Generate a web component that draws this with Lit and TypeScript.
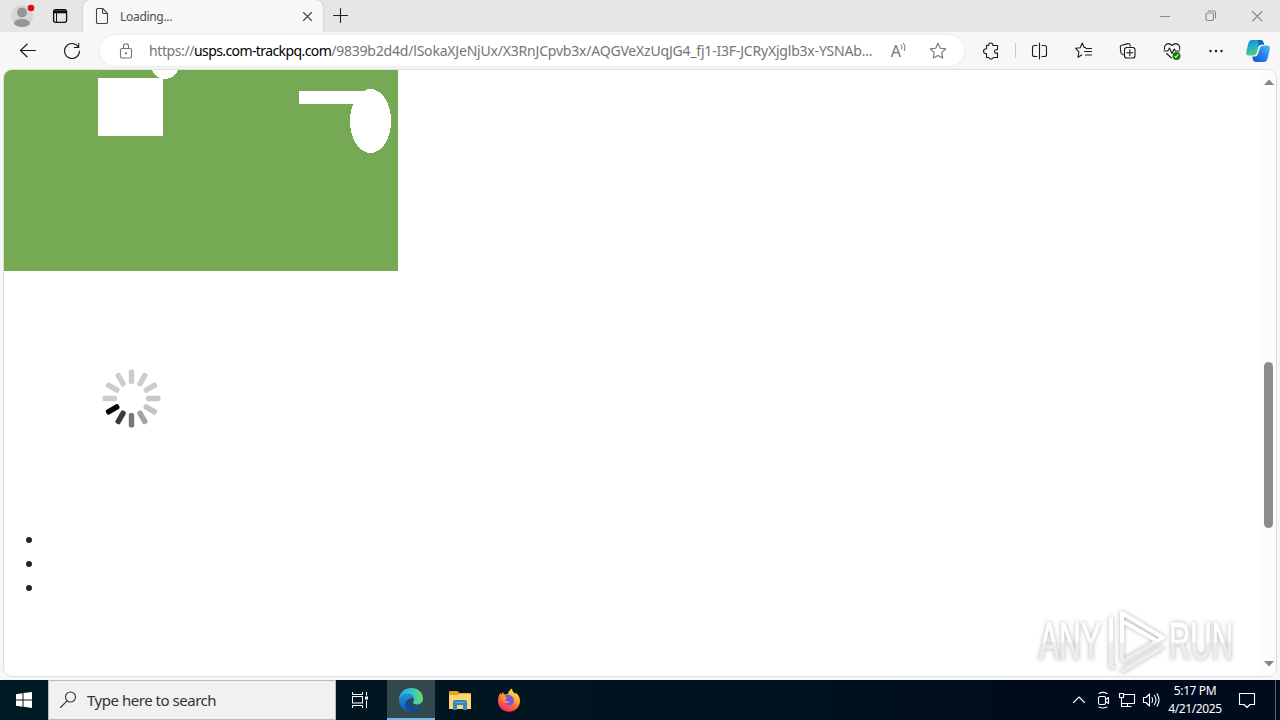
import { LitElement, html, css, svg } from 'lit';
import { customElement } from 'lit/decorators.js';

const stroke = (body: unknown, size = 24) => html`
  <svg class="icon" width=${size} height=${size} viewBox="0 0 24 24" fill="none"
    stroke="currentColor" stroke-width="1.1" stroke-linejoin="round" stroke-linecap="round">${body}</svg>
`;

const icons = {
  page: stroke(svg`<path d="M7.5 4.5h5.2l4.8 4.8v8.9q0 1.3-1.3 1.3H7.8q-1.3 0-1.3-1.3V5.8q0-1.3 1-1.3ZM12.5 4.8v3.4q0 1.3 1.3 1.3h3.4"/>`),
  close: stroke(svg`<path d="m8.5 8.5 8 8m0-8-8 8"/>`),
  plus: stroke(svg`<path d="M5.5 11.5h14m-7-7v14"/>`),
  minimize: stroke(svg`<path d="M7.5 12.5h9"/>`),
  restore: stroke(svg`<rect x="7" y="9" width="7.5" height="7.5" rx="1.5"/><path d="M9.2 7h5.3q2 0 2 2v5"/>`),
  closeWindow: stroke(svg`<path d="m7.5 7.5 9.5 9.5m0-9.5-9.5 9.5"/>`),
  back: stroke(svg`<path d="M19.5 11.5h-15M11.2 5l-6.7 6.5 6.7 6.5"/>`),
  reload: stroke(svg`<path d="M18 7.5A7.5 7.5 0 1 0 19.5 12M18.7 4.3v4.2h-4.4"/>`),
  lock: stroke(svg`<rect x="6.5" y="9.5" width="11" height="9.5" rx="1.5"/><path d="M9.5 9.5V7.3a2.5 2.5 0 0 1 5 0v2.2"/><circle cx="12" cy="14.3" r=".6" fill="currentColor"/>`),
  readAloud: html`
    <svg class="icon" width="24" height="24" viewBox="0 0 24 24">
      <text class="letter" x="4.7" y="17.5">A</text>
      <path d="M15 5.5q1.8 2.2.5 5M17.3 4q3 3.500 1 8" fill="none" stroke="currentColor"/>
    </svg>
  `,
  star: stroke(svg`<path d="m12 4.2 2.3 5 5.4.7-4 3.8 1 5.4-4.7-2.7-4.8 2.7 1-5.4-4-3.8 5.5-.7Z"/>`),
  puzzle: stroke(svg`<path d="M7.5 6.5h2.2q-.2-2.500 2.1-2.500t2.1 2.500h4.600v4.200h-1.200q-1.800 0-1.800 1.700t1.800 1.700h1.200v4.400h-4.300q-.2 1.600-2.100 1.600T10 18.500H7.500v-3.700q-3-.1-3-2.500t3-2.500Z"/>`),
  split: stroke(svg`<path d="M11.500 4v16M9 6.500H6.500q-2 0-2 2v7q0 2 2 2H9M14 6.500h2.500q2 0 2 2v7q0 2-2 2H14"/>`),
  favorites: stroke(svg`<path d="M13.500 8.500h-1.300l-2-4.500-2 4.700-4.500.6 3.200 3.500-1 5.500 3.800-2.200M14 9.500h5.500m-7 3h7m-6 3.500h6"/>`),
  collections: stroke(svg`<path d="M7.3 15.800 6 15q-1-.5-1.200-1.500L4.300 8.200q-.2-1.700 1.500-2L12 4.600q1.600-.3 2 1.200l.3 1.300"/><rect x="8.500" y="8.500" width="10.500" height="10.500" rx="2.300"/><path d="M13.800 10.800v6m-3-3h6"/>`),
  more: html`
    <svg class="icon" width="24" height="24" viewBox="0 0 24 24" fill="currentColor">
      <circle cx="6.500" cy="12" r="1.200"/><circle cx="12" cy="12" r="1.200"/><circle cx="17.500" cy="12" r="1.200"/>
    </svg>
  `,
  health: html`
    <svg class="icon" width="24" height="24" viewBox="0 0 24 24" fill="none" stroke="currentColor" stroke-width="1.1" stroke-linejoin="round" stroke-linecap="round">
      <path d="M4.500 10.500q-.5-2.500.7-4.200 3-3.500 6.800.2 4-3.700 7-.2 1.300 1.700.6 4.200M4 12h3.800l1.700-3 2.500 5.500 2.200-4.500 1.200 2h4M6.500 14.500l5 4.500"/>
      <circle cx="16.500" cy="17" r="4" fill="#107c10" stroke="none"/>
      <path d="m14.800 17.400 1 1 2.300-2.800" stroke="#d8f0d8"/>
    </svg>
  `,
  copilot: html`
    <svg class="icon" width="28" height="28" viewBox="0 0 28 28">
      <defs>
        <linearGradient id="cl" x1="0" y1="0" x2="0.4" y2="1"><stop offset="0" stop-color="#1676d8"/><stop offset=".4" stop-color="#1eabd2"/><stop offset="1" stop-color="#4fcf79"/></linearGradient>
        <linearGradient id="cr" x1="1" y1="0" x2="0" y2="1"><stop offset="0" stop-color="#45c3f5"/><stop offset=".5" stop-color="#257ff1"/><stop offset="1" stop-color="#1557cf"/></linearGradient>
      </defs>
      <path fill="url(#cl)" d="M8 3h8.500q2 0 2.800 2l.8 2.500h-2.500q-2.400 0-3.200 2.500l-2 6.500q-.7 2-3 2H5q-3.500 0-2.700-3.800l2-8.200Q5.200 3 8 3Z"/>
      <path fill="#1463c9" d="M14 3h2.500q2 0 2.800 2l.8 2.500h-2.500q-2 0-3 1.800Z"/>
      <path fill="url(#cr)" d="M20.500 8.500H23q3.500 0 2.800 3.800l-2 8.200q-.9 4.500-4 4.500H12q-2.300 0-3-2l-.8-3.500h2.500q2.400 0 3.200-2.500l2-6q.8-2.500 4.600-2.500Z"/>
    </svg>
  `,
  workspaces: html`
    <svg class="icon" width="24" height="24" viewBox="0 0 24 24" fill="none" stroke="#111" stroke-width="1.3">
      <rect x="5.600" y="5.700" width="13" height="12.600" rx="2"/><path d="M6 7.800h12.500" stroke-width="3"/><path d="M8.500 8v10" stroke-width="1"/>
    </svg>
  `,
  search: stroke(svg`<circle cx="14.500" cy="9" r="5"/><path d="M11 12.800 4.500 19.500"/>`),
  taskView: html`
    <svg class="icon" width="24" height="24" viewBox="0 0 24 24" fill="none" stroke="currentColor">
      <path d="M4.500 4v2.500h10V4M4.500 20v-2.500h10V20M18.500 4v3.500m0 5V20"/><rect x="4.500" y="8.500" width="10" height="6.500"/><path d="M17 10h3" stroke-width="3"/>
    </svg>
  `,
  chevron: stroke(svg`<path d="m6.500 14.500 5.500-5.500 5.500 5.500"/>`),
  meet: stroke(svg`<rect x="7.500" y="8.500" width="7" height="8" rx="1.500"/><path d="m14.500 11.500 3-2v6l-3-2M8 5.500q4-2.200 8 0M8 19q4 2 8 0"/>`),
  network: stroke(svg`<path d="M8.500 6.500h11v9h-13v-5M12.500 15.500v3m-3.500 0h7M4.500 5.500h4v4h-4zM6.500 9.500v9H9"/>`),
  volume: stroke(svg`<path d="M4.500 9.500H7L10.500 6v12L7 14.500H4.500zM13 9.500q1.500 2.500 0 5M15.500 7.500q3 4.500 0 9M18 5.800q4 6.200 0 12.400"/>`),
  notify: stroke(svg`<path d="M4.500 5.500h15v11H15L12 19.500l-3-3H4.500z"/>`),
};

@customElement('browser-tabs')
export class BrowserTabs extends LitElement {
  static styles = css`
    :host {
      display: flex;
      height: 32px;
      background: #e6e6e6;
      color: #222;
    }

    .icon {
      display: block;
      flex: none;
    }

    .start {
      display: flex;
      align-items: center;
      width: 83px;
      padding-left: 9px;
      box-sizing: border-box;
      gap: 12px;
    }

    .tab {
      display: flex;
      align-items: center;
      width: 240px;
      padding: 0 4px 0 7px;
      box-sizing: border-box;
      background: #f7f7f7;
      border-radius: 7px 7px 0 0;
      box-shadow: 0 0 2px #aaa;
      clip-path: inset(0 -3px);
      color: #444;
    }

    .title {
      flex: 1;
      padding-left: 6px;
      font-size: 12px;
      letter-spacing: -0.3px;
      color: #4d4d4d;
    }

    .new {
      display: flex;
      align-items: center;
      padding-left: 5px;
    }

    .controls {
      display: flex;
      align-items: center;
      gap: 22px;
      margin-left: auto;
      padding-right: 11px;
      color: #8a8a8a;
    }
  `;

  render() {
    return html`
      <div class="start">
        <svg class="icon" width="27" height="26" viewBox="0 0 27 26">
          <circle cx="13" cy="13" r="11" fill="#d9d7d5"/>
          <circle cx="13" cy="9.500" r="5" fill="#989694"/>
          <ellipse cx="13" cy="20" rx="8" ry="4" fill="#989694"/>
          <circle cx="22" cy="5" r="3.300" fill="#e20b14"/>
        </svg>
        ${icons.workspaces}
      </div>
      <div class="tab">
        ${icons.page}
        <span class="title">Loading...</span>
        ${icons.close}
      </div>
      <div class="new">${icons.plus}</div>
      <div class="controls">${icons.minimize}${icons.restore}${icons.closeWindow}</div>
    `;
  }
}

@customElement('browser-toolbar')
export class BrowserToolbar extends LitElement {
  static styles = css`
    :host {
      display: flex;
      align-items: center;
      height: 37px;
      padding: 0 1px 0 6px;
      box-sizing: border-box;
      background: #f7f7f7;
      color: #1b1b1b;
    }

    .icon {
      display: block;
      flex: none;
    }

    .button {
      display: flex;
      flex: none;
      justify-content: center;
      width: 44px;
    }

    .button.narrow {
      width: 40px;
    }

    .address {
      display: flex;
      flex: none;
      align-items: center;
      width: 864px;
      height: 31px;
      margin: 0 5px 0 6px;
      padding: 0 14px;
      box-sizing: border-box;
      border-radius: 16px;
      background: #fff;
      box-shadow: 0 0 3px #e2e2e2;
      color: #757575;
    }

    .url {
      flex: 1;
      padding-left: 11px;
      font-size: 14px;
      white-space: nowrap;
    }

    .scheme {
      letter-spacing: -0.4px;
    }

    .domain {
      color: #000;
      letter-spacing: -0.6px;
    }

    .path {
      letter-spacing: -0.2px;
    }

    .actions {
      display: flex;
      gap: 16px;
    }

    .letter {
      font-size: 16px;
      fill: currentColor;
    }

    .divider {
      flex: none;
      width: 1px;
      height: 15px;
      margin: 0 2px;
      background: #c8c8c8;
    }
  `;

  render() {
    return html`
      <div class="button">${icons.back}</div>
      <div class="button">${icons.reload}</div>
      <div class="address">
        ${icons.lock}
        <div class="url"><span class="scheme">https://</span><span class="domain">usps.com-trackpq.com</span><span class="path">/9839b2d4d/lSokaXJeNjUx/X3RnJCpvb3x/AQGVeXzUqJG4_fj1-I3F-JCRyXjglb3x-YSNAb...</span></div>
        <div class="actions">${icons.readAloud}${icons.star}</div>
      </div>
      <div class="button">${icons.puzzle}</div>
      <div class="divider"></div>
      ${[icons.split, icons.favorites, icons.collections, icons.health, icons.more].map(
        (icon) => html`<div class="button">${icon}</div>`
      )}
      <div class="button narrow">${icons.copilot}</div>
    `;
  }
}

@customElement('page-view')
export class PageView extends LitElement {
  static styles = css`
    :host {
      display: flex;
      position: relative;
      flex: 1;
      margin: 0 3px 3px;
      border: 1px solid #dedede;
      border-radius: 9px;
      overflow: hidden;
      background: #fff;
    }

    .content {
      flex: 1;
    }

    .content svg {
      display: block;
    }

    .spinner {
      margin: 97px 0 0 97px;
    }

    ul {
      margin: 99px 0 0;
      padding: 0 0 0 22px;
      list-style: none;
    }

    li {
      display: flex;
      align-items: center;
      height: 24px;
    }

    li::before {
      content: '';
      width: 6px;
      height: 6px;
      border-radius: 50%;
      background: #212529;
    }

    .scrollbar {
      display: flex;
      flex-direction: column;
      align-items: center;
      width: 15px;
      padding: 9px 0;
      box-sizing: border-box;
      background: #fcfcfc;
    }

    .thumb {
      width: 9px;
      height: 166px;
      margin-top: 277px;
      margin-bottom: auto;
      border-radius: 5px;
      background: #8b8b8b;
    }

    .watermark {
      position: absolute;
      right: 30px;
      bottom: 0;
      filter: drop-shadow(0 0 2px #b4b4b4);
    }

    .brand {
      font: 52px 'Liberation Sans', sans-serif;
    }
  `;

  shades = ['#cdcdcd', '#cdcdcd', '#cdcdcd', '#c8c8c8', '#c4c4c4', '#a3a3a3', '#777', '#3b3b3b', '#050505', '#cdcdcd', '#cdcdcd', '#cdcdcd'];

  render() {
    return html`
      <div class="content">
        <svg width="394" height="201" viewBox="0 0 394 201" shape-rendering="crispEdges">
          <rect width="394" height="201" fill="#75a953"/>
          <g fill="#fff">
            <rect x="94" y="8" width="65" height="58"/>
            <circle cx="161" cy="-4.500" r="13.500"/>
            <rect x="295" y="21" width="70" height="13"/>
            <ellipse cx="366.500" cy="51" rx="20.500" ry="32"/>
          </g>
        </svg>
        <svg class="spinner" width="61" height="61" viewBox="-30.5 -30.5 61 61">
          ${this.shades.map((shade, i) => svg`<rect x="-2.7" y="-29" width="5.400" height="14.500" rx="1.800" fill=${shade} transform="rotate(${i * 30})"/>`)}
        </svg>
        <ul><li></li><li></li><li></li></ul>
      </div>
      <div class="scrollbar">
        <svg width="10" height="6" viewBox="0 0 10 6"><path d="M0 6 5 .5 10 6Z" fill="#858585"/></svg>
        <div class="thumb"></div>
        <svg width="10" height="6" viewBox="0 0 10 6"><path d="M0 0 5 5.500 10 0Z" fill="#858585"/></svg>
      </div>
      <svg class="watermark" width="220" height="72" viewBox="0 0 220 72">
        <defs>
          <linearGradient id="fade" gradientUnits="userSpaceOnUse" x1="0" y1="5" x2="0" y2="68">
            <stop offset=".5" stop-color="#fff"/><stop offset=".56" stop-color="#ededed"/>
          </linearGradient>
        </defs>
        <g class="brand" fill="url(#fade)" stroke="url(#fade)">
          <text x="13" y="55" textLength="62" lengthAdjust="spacingAndGlyphs">ANY</text>
          <text x="143" y="55" textLength="64" lengthAdjust="spacingAndGlyphs">RUN</text>
        </g>
        <g fill="none" stroke="url(#fade)" stroke-width="4" stroke-linejoin="round">
          <path d="M96 58V9l41 24.500L96 58M98 18l35 20M87 15h-2v48h4M95 68l42-25"/>
        </g>
      </svg>
    `;
  }
}

@customElement('task-bar')
export class TaskBar extends LitElement {
  static styles = css`
    :host {
      display: flex;
      height: 40px;
      background: linear-gradient(90deg, #001a23, #00141f 50%, #000c1e 80%);
      color: #fff;
    }

    .icon {
      display: block;
      flex: none;
    }

    .item {
      display: flex;
      align-items: center;
      justify-content: center;
      width: 49px;
      box-sizing: border-box;
    }

    .item.start {
      width: 48px;
    }

    .item.active {
      width: 48px;
      background: #33474f;
      border-bottom: 2px solid #76b9ed;
      padding-top: 2px;
    }

    .item.view {
      width: 51px;
      padding-right: 3px;
    }

    .search {
      display: flex;
      align-items: center;
      gap: 7px;
      width: 288px;
      padding-left: 7px;
      box-sizing: border-box;
      border: 1px solid #bcbcbc;
      background: #f1f1f1;
      color: #333;
      font-size: 15px;
      letter-spacing: -0.47px;
    }

    .tray {
      display: flex;
      align-items: center;
      margin-left: auto;
    }

    .clock {
      width: 64px;
      font-size: 12px;
      line-height: 18px;
      letter-spacing: -0.4px;
      text-align: center;
    }

    .notify {
      padding: 0 16px 0 8px;
    }

    .desktop {
      width: 4px;
      height: 40px;
      border-left: 1px solid #59616d;
    }
  `;

  render() {
    return html`
      <div class="item start">
        <svg class="icon" width="16" height="16" viewBox="0 0 16 16" fill="#fff">
          <path d="M0 2.200 6.500 1.300V7.500H0ZM7.500 1.100 16 0v7.500H7.500ZM0 8.500h6.500v6.200L0 13.800ZM7.500 8.500H16V16l-8.500-1.200Z"/>
        </svg>
      </div>
      <div class="search">${icons.search}<span>Type here to search</span></div>
      <div class="item view">${icons.taskView}</div>
      <div class="item active">
        <svg class="icon" width="24" height="24" viewBox="0 0 24 24">
          <defs>
            <linearGradient id="eg" x1="0" y1=".5" x2="1" y2=".4"><stop stop-color="#28a9e8"/><stop offset=".5" stop-color="#2fc2d6"/><stop offset="1" stop-color="#6be05b"/></linearGradient>
            <linearGradient id="eb" x1="0" y1="0" x2="0" y2="1"><stop stop-color="#2492df"/><stop offset="1" stop-color="#0e59a8"/></linearGradient>
          </defs>
          <path fill="url(#eg)" d="M0 12C0 5 5 0 12 0c7.500 0 12 5 12 10.500 0 3.500-2.500 6-6 6-2.500 0-4-1-4-2 0-.8 1-1.300 1-3C15 8.500 12 6 8.500 6 4 6 1 9 0 12Z"/>
          <path fill="url(#eb)" d="M0 12c1-4 4-5.800 8-5.800 3.500 0 6.500 2.300 6.500 5-2-2-6-.5-6 3.800 0 4 3.500 7.500 7.500 8.300-1.200.5-2.500.7-4 .7C5 24 0 18.500 0 12Z"/>
          <path fill="#124b97" d="M11 11c-2.500 3-.5 7.500 5 7.800 2.500 0 4.800-.7 6.200-1.500.5-.2.800.1.600.5C20.500 22 17 24 13 24c-4.500-.5-7-3.500-7-7.500 0-3 2-5 5-5.500Z"/>
        </svg>
      </div>
      <div class="item">
        <svg class="icon" width="22" height="20" viewBox="0 0 22 20">
          <path fill="#e4a728" d="M0 2q0-1 1-1h7.500l2 2H21q1 0 1 1v4H0Z"/>
          <path fill="#fbd66c" d="M0 5h9l2-1h11v15H0Z"/>
          <path fill="#3386be" d="M4 12q0-2 2-2h10q2 0 2 2v8h-4v-5H8v5H4Z"/>
          <path fill="#5ba9d8" d="M6 12h10v1H6Z"/>
        </svg>
      </div>
      <div class="item">
        <svg class="icon" width="24" height="24" viewBox="0 0 24 24">
          <defs>
            <linearGradient id="ff" x1=".8" y1="0" x2=".3" y2="1"><stop stop-color="#fff04a"/><stop offset=".35" stop-color="#ffb52a"/><stop offset=".65" stop-color="#ff633b"/><stop offset="1" stop-color="#f0246e"/></linearGradient>
          </defs>
          <path fill="url(#ff)" d="M3.500 4.500 4 7l2-3 1 2.500 4-.5c.3-2.500 2-4.500 4-5.500 0 3 2 4 3.500 5.500V4.500c3 2.200 4.500 5 4.500 8.500 0 6.200-5 10.800-11 10.800S1 19 1 13c0-3 .8-6 2.500-8.500Z"/>
          <path fill="#7755e5" d="M8 7.500c4-2 9 .5 9 5 0 3-2.300 5-5 5-2 0-3.500-1-4.200-2.500 2 .5 3.200-.2 4.700-1-1.500-1-4.500 0-5-1.500-.3-1.200 1.500-1.500 3-2.500-1-.2-1.800-1-2.500-2.500Z"/>
          <path fill="#ff9636" d="M6 8c.5 1.500 1.700 2.200 4 2.300-.7 1-2 1.200-2 2 .3 1.500 3 .7 4.500 1.500-1.500 1.700-3.500 1.700-5 1C5 13.500 4.500 10 6 8Z"/>
        </svg>
      </div>
      <div class="tray">
        ${icons.chevron}${icons.meet}${icons.network}${icons.volume}
        <div class="clock">5:17 PM<br>4/21/2025</div>
        <div class="notify">${icons.notify}</div>
        <div class="desktop"></div>
      </div>
    `;
  }
}

@customElement('app-root')
export class AppRoot extends LitElement {
  static styles = css`
    :host {
      display: flex;
      flex-direction: column;
      width: 1280px;
      height: 720px;
      overflow: hidden;
      background: #f7f7f7;
      font-family: 'Noto Sans', 'Open Sans', sans-serif;
    }
  `;

  render() {
    return html`
      <browser-tabs></browser-tabs>
      <browser-toolbar></browser-toolbar>
      <page-view></page-view>
      <task-bar></task-bar>
    `;
  }
}
